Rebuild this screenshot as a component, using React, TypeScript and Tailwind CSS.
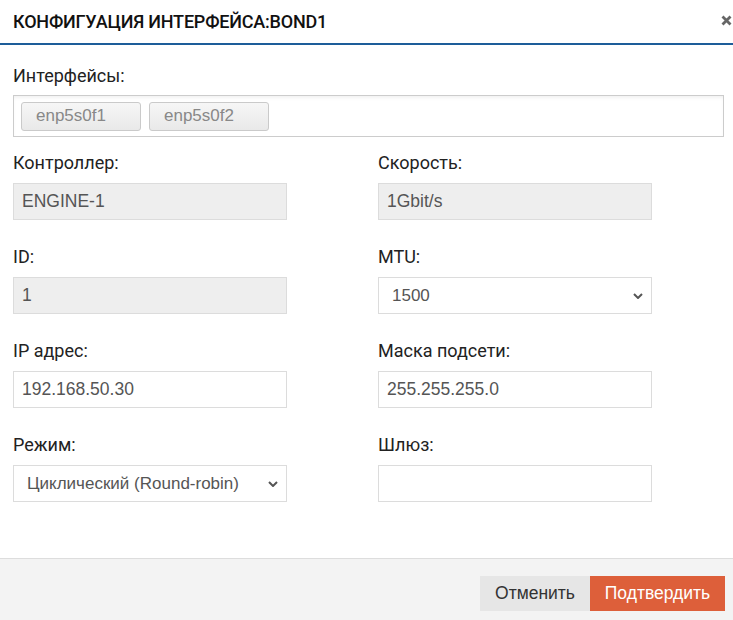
import React from "react";

const Chevron = () => (
  <svg width="10" height="6" viewBox="0 0 10 6" className="shrink-0">
    <path d="M1 1 L5 5 L9 1" fill="none" stroke="#555" strokeWidth="2" />
  </svg>
);

const Label = ({ children }: { children: React.ReactNode }) => (
  <div className="h-[24px] leading-[24px] mb-[8px] text-[18px] text-[#222] font-['Roboto',sans-serif]">
    {children}
  </div>
);

const Field = ({ value, readonly }: { value: string; readonly?: boolean }) => (
  <div
    className={`h-[37px] w-[274px] border border-[#dcdcdc] flex items-center pl-[8px] text-[17.5px] text-[#555] font-['Liberation_Sans',Arial,sans-serif] ${
      readonly ? "bg-[#eeeeee]" : "bg-white"
    }`}
  >
    {value}
  </div>
);

const Select = ({ value }: { value: string }) => (
  <div className="h-[37px] w-[274px] border border-[#dcdcdc] bg-white flex items-center justify-between pl-[13px] pr-[8px] text-[17px] text-[#555] font-['Liberation_Sans',Arial,sans-serif]">
    <span>{value}</span>
    <Chevron />
  </div>
);

const Chip = ({ text }: { text: string }) => (
  <div className="h-[29px] w-[120px] rounded-[3px] border border-[#cacaca] bg-gradient-to-b from-[#f6f6f6] to-[#e9e9e9] flex items-center pl-[14px] text-[17px] text-[#888] font-['Liberation_Sans',Arial,sans-serif]">
    {text}
  </div>
);

export default function App() {
  return (
    <div className="w-[733px] h-[620px] bg-white flex flex-col font-['Roboto',sans-serif] overflow-hidden">
      <div className="h-[45px] shrink-0 border-b-2 border-[#1d5d99] flex items-center justify-between pl-[13px] pr-[1px]">
        <div className="text-[18px] text-[#111] font-medium tracking-[-0.2px]">КОНФИГУАЦИЯ ИНТЕРФЕЙСА:BOND1</div>
        <svg width="11" height="11" viewBox="0 0 11 11" className="mt-[-2px]">
          <path d="M1.5 1.5 L9.5 9.5 M9.5 1.5 L1.5 9.5" stroke="#666" strokeWidth="2.8" />
        </svg>
      </div>
      <div className="flex-1 pl-[13px] pt-[19px]">
        <div className="h-[24px] leading-[24px] mb-[7px] text-[18px] text-[#222]">Интерфейсы:</div>
        <div className="w-[711px] h-[42px] border border-[#cccccc] shadow-[inset_0_3px_4px_-2px_rgba(0,0,0,0.08)] flex items-center gap-[8px] pl-[7px]">
          <Chip text="enp5s0f1" />
          <Chip text="enp5s0f2" />
        </div>
        <div className="mt-[14px] grid grid-cols-[274px_274px] gap-x-[91px] gap-y-[25px]">
          <div>
            <Label>Контроллер:</Label>
            <Field value="ENGINE-1" readonly />
          </div>
          <div>
            <Label>Скорость:</Label>
            <Field value="1Gbit/s" readonly />
          </div>
          <div>
            <Label>ID:</Label>
            <Field value="1" readonly />
          </div>
          <div>
            <Label>MTU:</Label>
            <Select value="1500" />
          </div>
          <div>
            <Label>IP адрес:</Label>
            <Field value="192.168.50.30" />
          </div>
          <div>
            <Label>Маска подсети:</Label>
            <Field value="255.255.255.0" />
          </div>
          <div>
            <Label>Режим:</Label>
            <Select value="Циклический (Round-robin)" />
          </div>
          <div>
            <Label>Шлюз:</Label>
            <Field value="" />
          </div>
        </div>
      </div>
      <div className="h-[62px] shrink-0 border-t border-[#dddddd] bg-[#f3f3f3] flex items-start justify-end pt-[17px] pr-[8px]">
        <button className="h-[35px] w-[110px] bg-[#e6e6e6] text-[17.5px] text-[#333] font-['Liberation_Sans',Arial,sans-serif]">
          Отменить
        </button>
        <button className="h-[35px] w-[135px] bg-[#dd5f3a] text-[17.5px] text-white font-['Liberation_Sans',Arial,sans-serif]">
          Подтвердить
        </button>
      </div>
    </div>
  );
}
